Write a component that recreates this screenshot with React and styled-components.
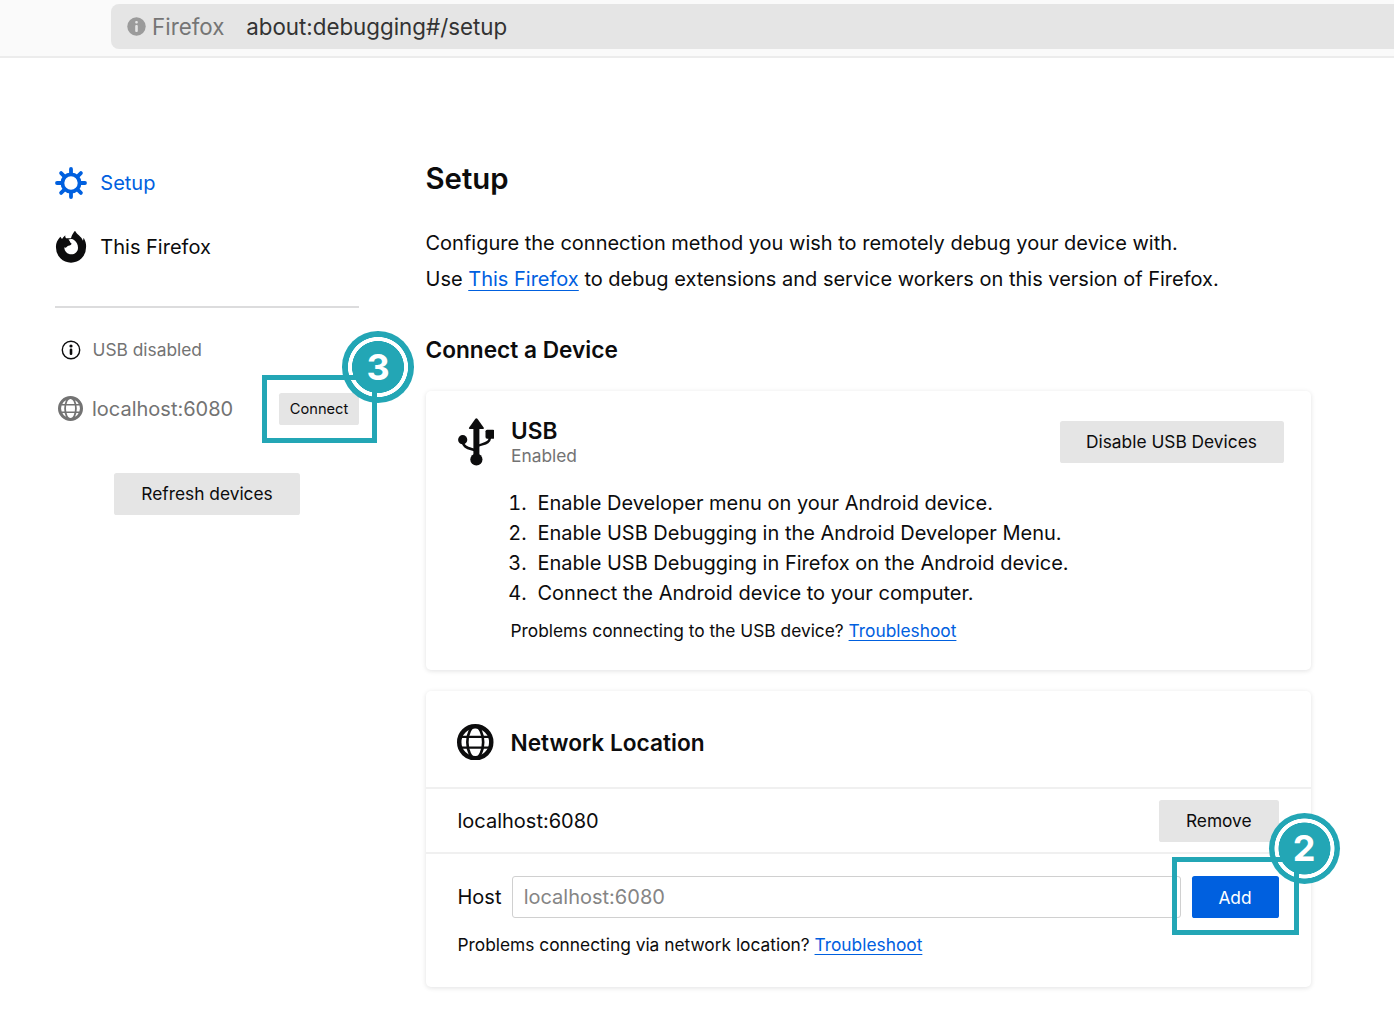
import React from "react";
import styled, { createGlobalStyle, css } from "styled-components";

const Global = createGlobalStyle`
  * { box-sizing: border-box; }
  body { margin: 0; background: #fff; color: #0c0c0d; font-family: Inter, "Noto Sans", sans-serif; font-size: 20px; overflow: hidden; }
  h1, h2, h3, p, ol { margin: 0; padding: 0; font-weight: inherit; font-size: inherit; }
  svg { display: block; flex: none; }
`;

const Page = styled.div`
  height: 1016px;
  position: relative;
  overflow: hidden;
`;

const Toolbar = styled.header`
  height: 58px;
  padding: 4px 0 0 111px;
  background: #fafafa;
  border-bottom: 2px solid #ececec;
`;

const UrlBar = styled.div`
  height: 45px;
  padding-left: 15.5px;
  display: flex;
  align-items: center;
  background: #e5e5e5;
  border-radius: 8px 0 0 8px;
  font-size: 22.33px;
  color: #333;
`;

const Identity = styled.span`
  margin: 0 21.8px 0 6.6px;
  color: #757575;
`;

const Body = styled.div`
  display: flex;
  padding-left: 55px;
`;

const Sidebar = styled.aside`
  width: 304px;
  margin-right: 66.5px;
  padding-top: 93px;
`;

const NavItem = styled.a`
  height: 64px;
  display: flex;
  align-items: center;
  gap: 13.3px;
  color: ${(p) => (p.$active ? "#0060df" : "#0c0c0d")};
`;

const Divider = styled.div`
  height: 1.5px;
  margin-top: 27px;
  background: #dcdcdd;
`;

const DeviceRow = styled.div`
  height: ${(p) => p.$h}px;
  padding-left: ${(p) => p.$indent}px;
  display: flex;
  align-items: center;
  gap: ${(p) => p.$gap}px;
  color: #737373;
  font-size: ${(p) => p.$size}px;
`;

const DeviceStatus = styled.span`
  padding-bottom: 1.5px;
`;

const Button = styled.button`
  height: 42px;
  border: 0;
  padding: 0;
  width: ${(p) => p.$w}px;
  border-radius: 2.6px;
  background: #e5e5e5;
  color: #0c0c0d;
  font: 400 17.33px Inter, sans-serif;
  flex: none;
  ${(p) =>
    p.$small &&
    css`
      height: 32px;
      font-size: 14.67px;
      margin-left: auto;
    `}
  ${(p) =>
    p.$primary &&
    css`
      background: #0060df;
      color: #fff;
    `}
`;

const Refresh = styled.div`
  display: flex;
  justify-content: center;
  margin-top: 48px;
`;

const Content = styled.main`
  width: 885px;
  padding-top: 99px;
`;

const Title = styled.h1`
  font-size: 29.33px;
  line-height: 44px;
  font-weight: 600;
`;

const Intro = styled.p`
  margin-top: 24px;
  line-height: 36px;
`;

const Link = styled.a`
  color: #0060df;
  text-decoration: underline;
  text-decoration-thickness: 1.33px;
  text-underline-offset: 0.18em;
  text-decoration-skip-ink: none;
`;

const SectionTitle = styled.h2`
  margin-top: 37px;
  font-size: 22.67px;
  line-height: 32px;
  font-weight: 600;
`;

const Card = styled.section`
  height: ${(p) => p.$h}px;
  margin-top: ${(p) => p.$top}px;
  border-radius: 5px;
  box-shadow: 0 1px 5px rgba(12, 12, 13, 0.12);
`;

const CardHead = styled.div`
  display: flex;
  align-items: center;
  height: ${(p) => p.$h}px;
  padding: ${(p) => p.$pad};
  gap: 17px;
`;

const HeadText = styled.div`
  flex: 1;
`;

const CardTitle = styled.h3`
  font-size: 22.67px;
  line-height: 28px;
  font-weight: 600;
  padding-top: ${(p) => p.$drop || 0}px;
`;

const Status = styled.div`
  font-size: 17.33px;
  line-height: 22px;
  color: #737373;
`;

const Steps = styled.ol`
  list-style: none;
  padding-left: 84px;
  line-height: 30px;
`;

const Step = styled.li`
  display: flex;
`;

const StepNumber = styled.span`
  width: 17px;
  margin-right: 11px;
  display: flex;
  justify-content: flex-end;
  font-variant-numeric: tabular-nums;
`;

const Hint = styled.p`
  font-size: 17.33px;
  line-height: 24px;
  padding: ${(p) => p.$pad};
`;

const LocationRow = styled.div`
  height: 67px;
  display: flex;
  align-items: center;
  justify-content: space-between;
  padding: 0 32px;
  border-top: 2px solid #f0f0f0;
  border-bottom: 2px solid #f0f0f0;
`;

const HostForm = styled.form`
  display: flex;
  align-items: center;
  padding: 22px 32px 0;
`;

const HostInput = styled.input`
  flex: 1;
  height: 42px;
  margin: 0 11px 0 10.7px;
  padding: 0 10.5px;
  border: 1.5px solid #d0d0d0;
  border-radius: 3px;
  font: 400 20px Inter, sans-serif;
  &::placeholder { color: #858585; opacity: 1; }
`;

const Callout = styled.div`
  position: absolute;
  left: ${(p) => p.$x}px;
  top: ${(p) => p.$y}px;
  width: ${(p) => p.$w}px;
  height: ${(p) => p.$h}px;
  border: 5px solid #23a6b5;
`;

const Ring = styled.div`
  position: absolute;
  left: ${(p) => p.$x}px;
  top: ${(p) => p.$y}px;
  width: 71.5px;
  height: 71.5px;
  border-radius: 50%;
  background: radial-gradient(circle, #23a6b5 25.7px, #fff 26.3px, #fff 29.7px, #23a6b5 30.3px);
`;

const Digit = styled.span`
  position: absolute;
  left: ${(p) => p.$x}px;
  top: ${(p) => p.$y}px;
  width: 72px;
  height: 72px;
  line-height: 72px;
  text-align: center;
  color: #fff;
  font-size: 36px;
  font-weight: 700;
`;

const InfoSolid = () => (
  <svg width="19" height="19" viewBox="0 0 19 19">
    <circle cx="9.5" cy="9.5" r="9.2" fill="#9b9b9b" />
    <rect x="8.2" y="4" width="2.6" height="2.6" rx="1" fill="#e5e5e5" />
    <rect x="8.2" y="8" width="2.6" height="7" rx="1" fill="#e5e5e5" />
  </svg>
);

const InfoOutline = () => (
  <svg width="20" height="20" viewBox="0 0 20 20">
    <circle cx="10" cy="10" r="8.7" fill="none" stroke="#0c0c0d" strokeWidth="1.4" />
    <circle cx="10" cy="6" r="1.6" fill="#0c0c0d" />
    <rect x="8.7" y="8.6" width="2.6" height="6.4" rx="1.2" fill="#0c0c0d" />
  </svg>
);

const Globe = ({ size, color }) => (
  <svg width={size} height={size} viewBox="0 0 36 36" fill="none" stroke={color}>
    <circle cx="18" cy="18" r="15.8" strokeWidth="4.4" />
    <ellipse cx="18" cy="18" rx="7.8" ry="15.5" strokeWidth="2.6" />
    <path d="M3 12.7H33M3 23.3H33" strokeWidth="2.2" />
  </svg>
);

const Gear = () => (
  <svg width="32" height="32" viewBox="0 0 32 32" fill="none" stroke="#0060df" strokeLinecap="round">
    <circle cx="16" cy="16" r="8.6" strokeWidth="3.8" />
    <path d="M16 2V6M16 26v4M2 16H6M26 16h4M6.1 6.1l3 3M22.9 22.9l3 3M25.9 6.1l-3 3M9.1 22.900l-3 3" strokeWidth="3.8" />
  </svg>
);

const FirefoxMark = () => (
  <svg width="32" height="32" viewBox="45 242 96 96" fill="#0c0c0d">
    <path fillRule="evenodd" d="M105 241C110 252 124 258 129 271L131 262C138 275 139 284 138 292A45 45 0 0 1 48 292C47 280 51 270 61 259L66 266C69 262 72 258 76 255C75 260 77 263 81 264L93 264C95 254 99 249 105 241ZM85 268C91 265 99 266 103 270C110 275 114 284 114 292C114 304 105 312 94 312C82 312 73 304 73 291C75 293 78 293 80 290C83 286 87 287 92 284C96 281 95 279 92 278C90 273 88 270 85 268Z" />
  </svg>
);

const UsbMark = () => (
  <svg width="36.5" height="48" viewBox="0 0 36.5 48" fill="#0c0c0d">
    <path d="M17.4 0.8Q18.4 -0.4 19.4 0.8L25.8 9.8Q26.2 11 25 11H11.8Q10.600 11 11 9.800Z" />
    <rect x="15.4" y="9" width="6" height="33" />
    <circle cx="18.4" cy="41.500" r="6.100" />
    <circle cx="4.700" cy="21.700" r="4.600" />
    <rect x="27.500" y="11.700" width="9" height="9" rx="1.600" />
    <path d="M4.700 23C5 29.500 10.500 30 17 32.300M32 19.500C31.500 25.500 26 25.300 19.500 28" fill="none" stroke="#0c0c0d" strokeWidth="2.600" />
  </svg>
);

const STEPS = [
  "Enable Developer menu on your Android device.",
  "Enable USB Debugging in the Android Developer Menu.",
  "Enable USB Debugging in Firefox on the Android device.",
  "Connect the Android device to your computer.",
];

export default function App() {
  return (
    <Page>
      <Global />
      <Toolbar>
        <UrlBar>
          <InfoSolid />
          <Identity>Firefox</Identity>
          <span>about:debugging#/setup</span>
        </UrlBar>
      </Toolbar>
      <Body>
        <Sidebar>
          <NavItem $active><Gear /><span>Setup</span></NavItem>
          <NavItem><FirefoxMark /><span>This Firefox</span></NavItem>
          <Divider />
          <DeviceRow $h={85} $indent={6} $gap={11.5} $size={17.33}>
            <InfoOutline /><DeviceStatus>USB disabled</DeviceStatus>
          </DeviceRow>
          <DeviceRow $h={32} $indent={3} $gap={9} $size={20}>
            <Globe size={25} color="#737373" /><span>localhost:6080</span>
            <Button $small $w={80}>Connect</Button>
          </DeviceRow>
          <Refresh><Button $w={186}>Refresh devices</Button></Refresh>
        </Sidebar>
        <Content>
          <Title>Setup</Title>
          <Intro>
            Configure the connection method you wish to remotely debug your device with.<br />
            Use <Link>This Firefox</Link> to debug extensions and service workers on this version of Firefox.
          </Intro>
          <SectionTitle>Connect a Device</SectionTitle>
          <Card $h={279} $top={25}>
            <CardHead $h={97} $pad="4px 27px 0 32px">
              <UsbMark />
              <HeadText>
                <CardTitle>USB</CardTitle>
                <Status>Enabled</Status>
              </HeadText>
              <Button $w={224}>Disable USB Devices</Button>
            </CardHead>
            <Steps>
              {STEPS.map((step, i) => (
                <Step key={step}><StepNumber>{i + 1}.</StepNumber><span>{step}</span></Step>
              ))}
            </Steps>
            <Hint $pad="11px 0 0 85px">Problems connecting to the USB device? <Link>Troubleshoot</Link></Hint>
          </Card>
          <Card $h={296} $top={21}>
            <CardHead $h={96} $pad="6px 32px 0 31.5px">
              <Globe size={36.5} color="#0c0c0d" />
              <CardTitle $drop={2}>Network Location</CardTitle>
            </CardHead>
            <LocationRow>
              <span>localhost:6080</span>
              <Button $w={119.5}>Remove</Button>
            </LocationRow>
            <HostForm>
              <span>Host</span>
              <HostInput placeholder="localhost:6080" />
              <Button type="button" $primary $w={87}>Add</Button>
            </HostForm>
            <Hint $pad="14.5px 32px 0">Problems connecting via network location? <Link>Troubleshoot</Link></Hint>
          </Card>
        </Content>
      </Body>
      <Ring $x={342.3} $y={331} />
      <Callout $x={262} $y={375} $w={115} $h={68} />
      <Digit $x={342} $y={331}>3</Digit>
      <Ring $x={1268.5} $y={812.7} />
      <Callout $x={1172} $y={857} $w={127} $h={78} />
      <Digit $x={1268} $y={812}>2</Digit>
    </Page>
  );
}
